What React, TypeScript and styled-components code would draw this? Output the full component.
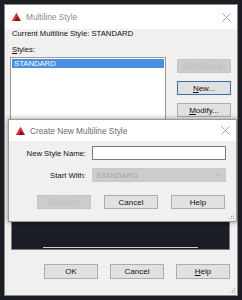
import React from "react";
import styled, { createGlobalStyle } from "styled-components";

const GlobalStyle = createGlobalStyle`
    html, body {
        margin: 0;
        padding: 0;
        background-color: #1b1e25;
    }
    * {
        box-sizing: border-box;
    }
`

const Page = styled.div`
    position: relative;
    width: 242px;
    height: 300px;
    padding: 4px;
    background-color: #1b1e25;
    font-family: "Liberation Sans", Arial, sans-serif;
    color: #111;
`

const Dialog = styled.div`
    position: relative;
    width: 234px;
    height: 292px;
    background-color: #f0f0f0;
    border: 1px solid #8a8a8a;
    display: flex;
    flex-direction: column;
`

const TitleBar = styled.div<{ $h: number; $active?: boolean }>`
    display: flex;
    align-items: center;
    height: ${p => p.$h}px;
    flex-shrink: 0;
    background-color: #fff;
    padding: 0 6px 0 7px;
    font-size: 8.3px;
    color: ${p => p.$active ? "#6a6a6a" : "#8c8c8c"};

    & > .title {
        flex: 1;
        margin-left: 5px;
    }
`

const Body = styled.div`
    flex: 1;
    display: flex;
    flex-direction: column;
    padding: 0 6px 0 5px;
    font-size: 7.7px;
`

const Label = styled.div<{ $mt?: number; $pl?: number }>`
    line-height: 10px;
    height: 10px;
    margin-top: ${p => p.$mt || 0}px;
    padding-left: ${p => p.$pl || 0}px;
    white-space: nowrap;
`

const Row = styled.div`
    display: flex;
    margin-top: 2px;
`

const ListBox = styled.div`
    width: 156px;
    height: 90px;
    background-color: #fff;
    border: 1px solid #9a9a9a;
    padding: 1px;
`

const ListItem = styled.div<{ $selected?: boolean }>`
    height: 9px;
    line-height: 9px;
    padding-left: 2px;
    font-size: 7.7px;
    background-color: ${p => p.$selected ? "#4a90e2" : "transparent"};
    color: ${p => p.$selected ? "#fff" : "#111"};
`

const SideButtons = styled.div`
    display: flex;
    flex-direction: column;
    gap: 8px;
    margin-left: 11px;
    padding-top: 2px;
`

const Button = styled.div<{ $w?: number; $h?: number; $disabled?: boolean; $focus?: boolean }>`
    width: ${p => p.$w || 54}px;
    height: ${p => p.$h || 14}px;
    display: flex;
    align-items: center;
    justify-content: center;
    font-size: 8px;
    background-color: ${p => p.$disabled ? "#cccccc" : "#e1e1e1"};
    border: 1px solid ${p => p.$disabled ? "#c4c4c4" : p.$focus ? "#3a6ea5" : "#adadad"};
    color: ${p => p.$disabled ? "#ededed" : "#111"};
    text-shadow: ${p => p.$disabled ? "0 0 1px #8e8e8e, 0 0 1px #8e8e8e" : "none"};

    & u {
        text-decoration: underline;
    }
`

const Preview = styled.div`
    margin: 43px 1px 0 1px;
    height: 60px;
    background-color: #1a1d26;
    border: 1px solid #7d7d7d;
    display: flex;
    flex-direction: column;
    justify-content: space-between;
    padding: 12px 31px 1px;
`

const PreviewLine = styled.div`
    height: 1px;
    background-color: #cfcfcf;
`

const ButtonRow = styled.div<{ $gap: number; $pl: number; $mt: number }>`
    display: flex;
    gap: ${p => p.$gap}px;
    padding-left: ${p => p.$pl}px;
    margin-top: ${p => p.$mt}px;
`

const SubDialog = styled.div`
    position: absolute;
    left: 8px;
    top: 119px;
    width: 229px;
    height: 103px;
    background-color: #f0f0f0;
    border: 1px solid #9a9a9a;
    box-shadow: 0 0 5px rgba(0, 0, 0, 0.45);
    display: flex;
    flex-direction: column;
`

const SubBody = styled.div`
    flex: 1;
    display: flex;
    flex-direction: column;
    padding-top: 5px;
    font-size: 7.7px;
`

const FieldRow = styled.div<{ $mt?: number }>`
    display: flex;
    align-items: center;
    margin-top: ${p => p.$mt || 0}px;

    & > .label {
        width: 77px;
        text-align: right;
        white-space: nowrap;
    }
`

const TextInput = styled.div`
    margin-left: 6px;
    width: 134px;
    height: 14px;
    background-color: #fff;
    border: 1px solid #7a7a7a;
`

const Select = styled.div`
    margin-left: 6px;
    width: 134px;
    height: 14px;
    background-color: #cccccc;
    border: 1px solid #c8c8c8;
    color: #a4a4a4;
    display: flex;
    align-items: center;
    justify-content: space-between;
    padding: 0 4px 0 3px;
    font-size: 7.7px;
`

const Grip = styled.svg`
    position: absolute;
    right: 1px;
    bottom: 1px;
`

const Logo = () => (
    <svg width="9" height="8" viewBox="0 0 9 8">
        <polygon points="4.5,0 9,8 0,8" fill="#b3121a" />
        <polygon points="4.5,0 6,2.7 2.5,8 0,8" fill="#e0313a" />
        <polygon points="4.5,4.5 6,8 3.2,8" fill="#7a0a10" />
    </svg>
)

const CloseX = () => (
    <svg width="9" height="9" viewBox="0 0 9 9">
        <path d="M0.5 0.5 L8.5 8.5 M8.5 0.5 L0.5 8.5" stroke="#8a8a8a" strokeWidth="0.8" />
    </svg>
)

const GripDots = () => (
    <Grip width="6" height="6" viewBox="0 0 6 6">
        <rect x="4" y="0" width="1" height="1" fill="#a0a0a0" />
        <rect x="2" y="2" width="1" height="1" fill="#a0a0a0" />
        <rect x="4" y="2" width="1" height="1" fill="#a0a0a0" />
        <rect x="0" y="4" width="1" height="1" fill="#a0a0a0" />
        <rect x="2" y="4" width="1" height="1" fill="#a0a0a0" />
        <rect x="4" y="4" width="1" height="1" fill="#a0a0a0" />
    </Grip>
)

export default function App() {
    return (
        <Page>
            <GlobalStyle />
            <Dialog>
                <TitleBar $h={24}>
                    <Logo />
                    <span className="title">Multiline Style</span>
                    <CloseX />
                </TitleBar>
                <Body>
                    <Label $pl={2}>Current Multiline Style: STANDARD</Label>
                    <Label $mt={6} $pl={2}><u>S</u>tyles:</Label>
                    <Row>
                        <ListBox>
                            <ListItem $selected>STANDARD</ListItem>
                        </ListBox>
                        <SideButtons>
                            <Button $disabled>Set Current</Button>
                            <Button $focus><u>N</u>ew...</Button>
                            <Button><u>M</u>odify...</Button>
                        </SideButtons>
                    </Row>
                    <Preview>
                        <PreviewLine />
                        <PreviewLine />
                    </Preview>
                    <ButtonRow $gap={12} $pl={34} $mt={14}>
                        <Button $h={15}>OK</Button>
                        <Button $h={15}>Cancel</Button>
                        <Button $h={15}><u>H</u>elp</Button>
                    </ButtonRow>
                </Body>
                <GripDots />
            </Dialog>

            <SubDialog>
                <TitleBar $h={21} $active>
                    <Logo />
                    <span className="title">Create New Multiline Style</span>
                    <CloseX />
                </TitleBar>
                <SubBody>
                    <FieldRow>
                        <span className="label">New Style Name:</span>
                        <TextInput />
                    </FieldRow>
                    <FieldRow $mt={8}>
                        <span className="label">Start With:</span>
                        <Select>
                            <span>STANDARD</span>
                            <svg width="6" height="4" viewBox="0 0 6 4">
                                <path d="M0.5 0.5 L3 3 L5.5 0.5" stroke="#b4b4b4" strokeWidth="0.8" fill="none" />
                            </svg>
                        </Select>
                    </FieldRow>
                    <ButtonRow $gap={13} $pl={28} $mt={13}>
                        <Button $disabled>Continue</Button>
                        <Button>Cancel</Button>
                        <Button>Help</Button>
                    </ButtonRow>
                </SubBody>
                <GripDots />
            </SubDialog>
        </Page>
    );
}
